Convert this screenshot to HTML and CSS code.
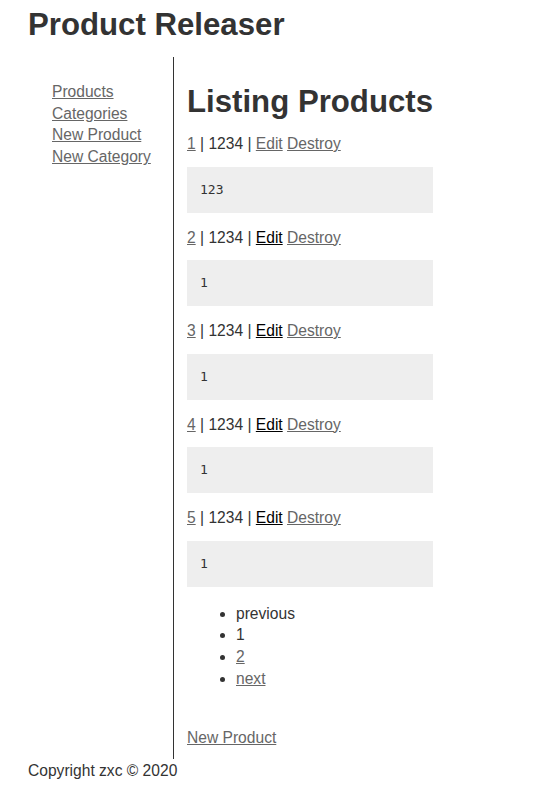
FILE: index.html
```html
<!DOCTYPE html>
<html>
<head>
<meta charset="utf-8">
<title>Product Releaser</title>
<link rel="stylesheet" href="styles.css">
</head>
<body>
<div class="page">
  <header class="banner"><h1 class="title">Product Releaser</h1></header>
  <div class="columns">
    <nav class="side">
      <a href="#">Products</a>
      <a href="#">Categories</a>
      <a href="#">New Product</a>
      <a href="#">New Category</a>
    </nav>
    <main class="main">
      <h1 class="heading">Listing Products</h1>
      <div class="product">
        <p class="row"><a href="#">1</a> | 1234 | <a href="#">Edit</a> <a href="#">Destroy</a></p>
        <pre class="desc">123</pre>
      </div>
      <div class="product">
        <p class="row"><a href="#">2</a> | 1234 | <a class="visited" href="#">Edit</a> <a href="#">Destroy</a></p>
        <pre class="desc">1</pre>
      </div>
      <div class="product">
        <p class="row"><a href="#">3</a> | 1234 | <a class="visited" href="#">Edit</a> <a href="#">Destroy</a></p>
        <pre class="desc">1</pre>
      </div>
      <div class="product">
        <p class="row"><a href="#">4</a> | 1234 | <a class="visited" href="#">Edit</a> <a href="#">Destroy</a></p>
        <pre class="desc">1</pre>
      </div>
      <div class="product">
        <p class="row"><a href="#">5</a> | 1234 | <a class="visited" href="#">Edit</a> <a href="#">Destroy</a></p>
        <pre class="desc">1</pre>
      </div>
      <ul class="pager">
        <li>previous</li>
        <li>1</li>
        <li><a href="#">2</a></li>
        <li><a href="#">next</a></li>
      </ul>
      <p class="new"><a href="#">New Product</a></p>
    </main>
  </div>
  <footer class="footer">Copyright zxc © 2020</footer>
</div>
</body>
</html>
```

FILE: styles.css
```css
html, body {
  margin: 0;
  padding: 0;
  background: #fff;
}
body {
  font-family: "Liberation Sans", Arial, sans-serif;
  font-size: 15.6px;
  line-height: 21.7px;
  color: #333;
}
a {
  color: #666;
  text-decoration: underline;
}
a.visited {
  color: #000;
}
.page {
  padding-left: 28px;
}
.banner {
  height: 57px;
}
.title {
  margin: 0;
  padding-top: 7px;
  font-size: 31.2px;
  line-height: 36px;
  font-weight: bold;
  color: #333;
}
.columns {
  display: flex;
  align-items: stretch;
}
.side {
  width: 146px;
  box-sizing: border-box;
  padding: 24px 0 0 24px;
  display: flex;
  flex-direction: column;
  border-right: 1px solid #333;
}
.side a {
  display: block;
}
.main {
  width: fit-content;
  padding: 0 0 11px 13px;
}
.heading {
  margin: 0;
  padding-top: 27px;
  font-size: 31.2px;
  line-height: 36px;
  font-weight: bold;
  color: #333;
  white-space: nowrap;
}
.product {
  display: flex;
  flex-direction: column;
}
.row {
  margin: 13px 0 12px 0;
}
.desc {
  margin: 0;
  background: #eee;
  height: 46px;
  box-sizing: border-box;
  padding: 15px 13px;
  font-family: "DejaVu Sans Mono", monospace;
  font-size: 13px;
  line-height: 16px;
  color: #333;
}
.product + .product .row {
  margin-top: 13.8px;
}
.pager {
  margin: 16px 0 0 0;
  padding-left: 49px;
}
.new {
  margin: 37px 0 0 0;
}
.footer {
  padding-top: 1px;
  line-height: 21.7px;
}
```
